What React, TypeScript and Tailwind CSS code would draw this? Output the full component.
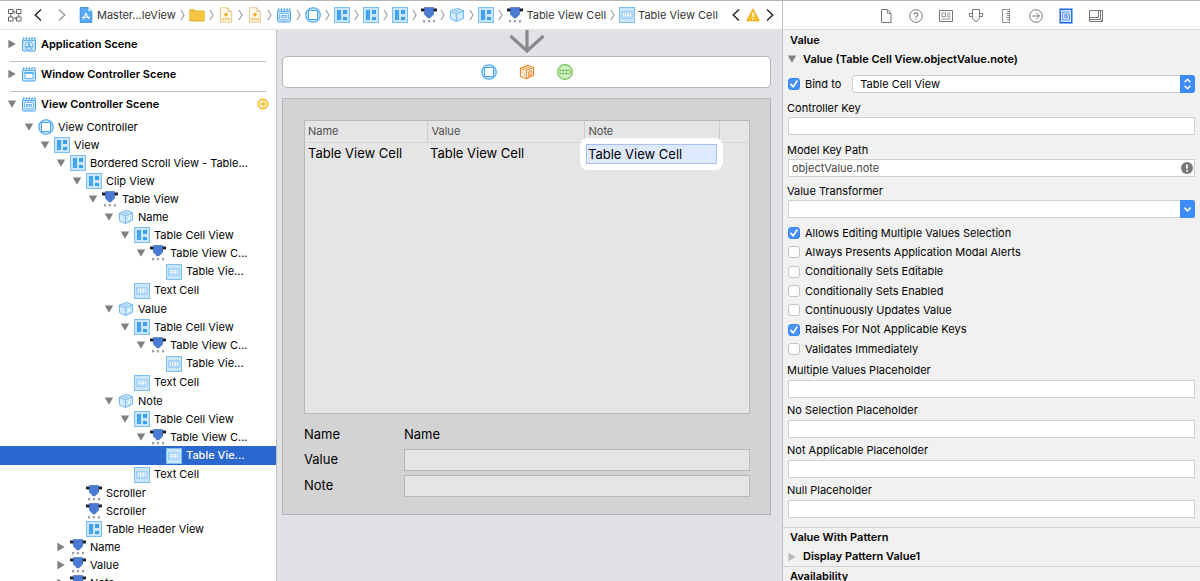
import React from "react";

type IconKind =
  | "appScene" | "windowScene" | "viewScene" | "controller" | "view" | "object"
  | "column" | "cell" | "project" | "folder" | "storyboard" | "responder" | "exit";

const BLUE = "#45a2ee";
const PALE = "#c9e6fc";

function Clapper({ children }: { children: React.ReactNode }) {
  return (
    <>
      <path d="M1.5 4.5h13v9a1.5 1.5 0 0 1-1.5 1.5H3a1.5 1.5 0 0 1-1.5-1.5z" fill={PALE} stroke={BLUE} />
      <path d="M1.5 1.2h13v3h-13z" fill="#e4f3fe" />
      <path d="M2 3.6l1.2-2M4.8 3.6l1.2-2M7.6 3.6l1.2-2M10.4 3.6l1.2-2M13.2 3.6l1.2-2" stroke={BLUE} strokeWidth="1.3" />
      {children}
    </>
  );
}

function Icon({ kind }: { kind: IconKind }) {
  let body: React.ReactNode = null;
  switch (kind) {
    case "appScene":
      body = (
        <Clapper>
          <circle cx="8" cy="9.8" r="3.9" fill="#e4f3fe" stroke={BLUE} strokeWidth=".7" />
          <path d="M5.8 12.4L8.6 7M10.2 12.4L7.4 7M4.6 10.8h6.8" stroke={BLUE} strokeWidth=".9" />
        </Clapper>
      );
      break;
    case "windowScene":
      body = (
        <Clapper>
          <rect x="4" y="6.5" width="8" height="6" fill="#fff" stroke={BLUE} strokeWidth=".8" />
          <path d="M4 7.2h8" stroke={BLUE} strokeWidth="1.2" />
        </Clapper>
      );
      break;
    case "viewScene":
      body = (
        <Clapper>
          <rect x="3.7" y="6.4" width="8.6" height="6.4" rx="1" fill="#fff" stroke={BLUE} strokeWidth=".8" />
          <rect x="5.7" y="8.4" width="4.6" height="2.4" fill={PALE} stroke={BLUE} strokeWidth=".8" />
        </Clapper>
      );
      break;
    case "controller":
      body = (
        <>
          <circle cx="8" cy="8" r="7.3" fill={PALE} stroke={BLUE} strokeWidth="1.1" />
          <rect x="3.5" y="3.5" width="9" height="9" rx=".6" fill="#fff" stroke={BLUE} strokeWidth="1" />
        </>
      );
      break;
    case "view":
      body = (
        <>
          <rect x=".5" y=".5" width="15" height="15" fill={PALE} stroke="#7dbff5" />
          <path d="M3 3h4v10H3zM9 3h4v4H9zM9 10h4v3H9z" fill="#3d9ff0" />
          <path d="M5.2 3v10" stroke="#6fb9f5" strokeWidth=".5" />
        </>
      );
      break;
    case "object":
      body = (
        <>
          <path d="M0 1.6h4v3H1L0 4zM16 1.6h-4v3h3l1-.6z" fill="#1f1f21" />
          <path d="M3.4.6h9.2v6.6L8.8 11H7.2L3.4 7.2z" fill="#4a7ad4" stroke="#315fb4" strokeWidth=".6" />
          <path d="M3 13v2.4M8 13v2.4M13 13v2.4" stroke="#3c3c3c" strokeWidth="1" />
        </>
      );
      break;
    case "column":
      body = (
        <>
          <path d="M1.4 4.2L8.6 1.4l6 2.4v7.4L7.4 14.6l-6-3z" fill="#d3ebfd" stroke="#6ab6f2" strokeWidth="1" strokeLinejoin="round" />
          <path d="M1.4 4.4l6 2.4 7.2-2.8M7.4 6.8v7.6" fill="none" stroke="#6ab6f2" strokeWidth=".9" />
          <path d="M4.4 3.1l6.2 2.4M4.4 5.6l6.2-2.6" fill="none" stroke="#86c4f5" strokeWidth=".7" />
          <path d="M9.2 8.4v3.6l3.6-1.6V6.8z" fill="#eef8ff" stroke="#9bcff7" strokeWidth=".6" />
        </>
      );
      break;
    case "cell":
      body = (
        <>
          <rect x=".5" y=".5" width="15" height="15" fill={PALE} stroke="#7dbff5" />
          <rect x="3" y="5" width="10" height="6" fill="#fff" stroke="#6db6f4" strokeWidth=".9" />
          <path d="M4.6 7h7M4.6 9.2h7" stroke="#5aaaf0" strokeWidth="1" strokeDasharray="1.4 1.2" />
        </>
      );
      break;
    case "project":
      body = (
        <>
          <path d="M2.2.6h8l3.6 3.6v11.2H2.2z" fill="#56a9f4" stroke="#2f7fd8" strokeWidth=".8" />
          <path d="M10.2.6v3.6h3.6z" fill="#d8ecfd" />
          <path d="M5 12l3.4-6M11 12L7.6 6M4 10.2h8" stroke="#fff" strokeWidth="1.1" />
        </>
      );
      break;
    case "folder":
      body = (
        <>
          <path d="M.4 2.2h5l1 1.4h9.2v10H.4z" fill="#e5b32d" />
          <path d="M.4 4.4h15.2v9.8H.4z" fill="#f4c642" />
          <path d="M.4 13.8h15.2" stroke="#d9a51d" strokeWidth=".8" />
        </>
      );
      break;
    case "storyboard":
      body = (
        <>
          <path d="M2.4.8h7.4l3.8 3.8v10.6H2.4z" fill="#fff8ea" stroke="#e8c98c" />
          <path d="M9.8.8v3.8h3.8" fill="none" stroke="#d3b988" strokeWidth=".8" />
          <path d="M8 5.4l2.2 2.2L8 9.8 5.8 7.6z" fill="#f0ab22" />
          <path d="M4.2 11.4h1.8v1.6H4.2zM10 11.4h1.8v1.6H10zM6 12.2h4M8 9.8v2.4" stroke="#efc060" strokeWidth=".8" fill="none" />
        </>
      );
      break;
    case "responder":
      body = (
        <>
          <path d="M1.4 4.2L8.6 1.2l6 2.2v7.8L7.4 14.8l-6-2.6z" fill="#fff6ec" stroke="#e9892a" strokeWidth="1.1" strokeLinejoin="round" />
          <path d="M1.4 4.4l6 2.2 7.2-3M7.4 6.6v8M3.8 3.4l6 2.2M6.2 2.4l6 2.2M9.4 8v4.4l3.4-1.7V6.6zM11 7.3v4.2M3.2 7.4v2M5.4 9.6v2" fill="none" stroke="#e9892a" strokeWidth=".9" />
        </>
      );
      break;
    case "exit":
      body = (
        <>
          <circle cx="8" cy="8" r="7.4" fill="#cdeebf" stroke="#6cc04a" strokeWidth="1.1" />
          <path d="M3 6.4h10v3.2H3zM6.3 6.4v3.2M9.7 6.4v3.2" fill="#e9f8e2" stroke="#5db53b" strokeWidth=".8" />
        </>
      );
      break;
  }
  return <svg viewBox="0 0 16 16" className="size-4 shrink-0" fill="none" aria-hidden="true">{body}</svg>;
}

function Triangle({ open, faint = false }: { open: boolean; faint?: boolean }) {
  return (
    <svg viewBox="0 0 10 10" className="size-[10px] shrink-0" aria-hidden="true">
      <path d={open ? "M.8 1.4h8.4L5 8.8z" : "M1.4.8v8.4L8.8 5z"} fill={faint ? "#b9b9b9" : "#808080"} />
    </svg>
  );
}

function Crumb() {
  return (
    <svg viewBox="0 0 6 16" className="h-4 w-[5px] shrink-0" fill="none" aria-hidden="true">
      <path d="M1 2l4 6-4 6" stroke="#777" strokeWidth="1.1" />
    </svg>
  );
}

function Arrow({ dir, dim = false }: { dir: "left" | "right"; dim?: boolean }) {
  return (
    <svg viewBox="0 0 8 14" className="h-[14px] w-2 shrink-0" fill="none" aria-hidden="true">
      <path d={dir === "left" ? "M7 1.5L1.2 7 7 12.5" : "M1 1.5L6.8 7 1 12.5"} stroke={dim ? "#9a9a9a" : "#222"} strokeWidth="1.4" />
    </svg>
  );
}

const crumbs: { icon: IconKind; text?: string }[] = [
  { icon: "project", text: "Master...leView" },
  { icon: "folder" },
  { icon: "storyboard" },
  { icon: "storyboard" },
  { icon: "viewScene" },
  { icon: "controller" },
  { icon: "view" },
  { icon: "view" },
  { icon: "view" },
  { icon: "object" },
  { icon: "column" },
  { icon: "view" },
  { icon: "object", text: "Table View Cell" },
  { icon: "cell", text: "Table View Cell" },
];

function JumpBar() {
  return (
    <nav className="flex h-[29px] shrink-0 items-center border-b border-[#e2e2e2] bg-white px-2 text-[#333]">
      <button type="button" aria-label="Related items">
        <svg viewBox="0 0 14 14" className="size-[14px]" fill="none" stroke="#666" aria-hidden="true">
          <path d="M.5 1.5h4.5v4H.5zM8.5 1.5h4.5v4H8.5zM.5 9h4.5v4H.5zM8.5 9h4.5v4H8.5zM5 3.5h1.8v2M8.5 11H7V9M2.8 5.5V9M10.8 5.5V9" />
        </svg>
      </button>
      <button type="button" aria-label="Back" className="ml-3"><Arrow dir="left" /></button>
      <button type="button" aria-label="Forward" className="ml-4"><Arrow dir="right" dim /></button>
      <ol className="ml-3 flex max-w-[640px] flex-1 items-center justify-between">
        {crumbs.map((c, i) => (
          <React.Fragment key={i}>
            {i > 0 && <li aria-hidden="true"><Crumb /></li>}
            <li>
              <a href="#jump" className="flex items-center gap-[3px] whitespace-nowrap">
                <Icon kind={c.icon} />
                {c.text}
              </a>
            </li>
          </React.Fragment>
        ))}
      </ol>
      <div className="ml-auto flex items-center pl-3">
        <button type="button" aria-label="Previous issue"><Arrow dir="left" /></button>
        <button type="button" aria-label="Issues" className="mx-1.5">
          <svg viewBox="0 0 14 14" className="size-[14px]" aria-hidden="true">
            <path d="M7 1.2L13 12.6H1z" fill="#fcc02e" stroke="#f3ad1b" strokeWidth="1.2" strokeLinejoin="round" />
            <path d="M7 4.6v4.2M7 10v1.4" stroke="#fff" strokeWidth="1.5" />
          </svg>
        </button>
        <button type="button" aria-label="Next issue"><Arrow dir="right" /></button>
      </div>
    </nav>
  );
}

type Node = { label: string; icon: IconKind; open?: boolean; selected?: boolean; children?: Node[] };

function column(label: string, selected = false): Node {
  return {
    label, icon: "column", open: true, children: [
      {
        label: "Table Cell View", icon: "view", open: true, children: [
          { label: "Table View C...", icon: "object", open: true, children: [{ label: "Table Vie...", icon: "cell", selected }] },
        ],
      },
      { label: "Text Cell", icon: "cell" },
    ],
  };
}

const tree: Node = {
  label: "View Controller", icon: "controller", open: true, children: [
    {
      label: "View", icon: "view", open: true, children: [
        {
          label: "Bordered Scroll View - Table...", icon: "view", open: true, children: [
            {
              label: "Clip View", icon: "view", open: true, children: [
                { label: "Table View", icon: "object", open: true, children: [column("Name"), column("Value"), column("Note", true)] },
              ],
            },
            { label: "Scroller", icon: "object" },
            { label: "Scroller", icon: "object" },
            { label: "Table Header View", icon: "view" },
          ],
        },
        { label: "Name", icon: "object", open: false },
        { label: "Value", icon: "object", open: false },
        { label: "Note", icon: "object", open: false },
      ],
    },
  ],
};

function TreeRow({ node, depth }: { node: Node; depth: number }) {
  const height = node.icon === "cell" ? "h-[19px]" : "h-[18px]";
  const tone = node.selected ? "bg-[#2a68d0] font-medium text-white" : "";
  return (
    <li>
      <div className={`flex items-center whitespace-nowrap ${height} ${tone}`} style={{ paddingLeft: 24 + depth * 16 }}>
        <span className="flex w-[14px] shrink-0">
          {node.open !== undefined && (
            <button type="button" aria-label={node.open ? "Collapse" : "Expand"}><Triangle open={node.open} /></button>
          )}
        </span>
        <Icon kind={node.icon} />
        <span className="ml-1">{node.label}</span>
      </div>
      {node.children && (
        <ul>
          {node.children.map((c, i) => <TreeRow key={i} node={c} depth={depth + 1} />)}
        </ul>
      )}
    </li>
  );
}

function SceneRow({ label, icon, open = false }: { label: string; icon: IconKind; open?: boolean }) {
  return (
    <div className="-mx-[3px] flex h-5 items-center font-semibold">
      <button type="button" aria-label={open ? "Collapse" : "Expand"} className="mr-1"><Triangle open={open} /></button>
      <Icon kind={icon} />
      <span className="ml-1">{label}</span>
      {open && (
        <svg viewBox="0 0 12 12" className="ml-auto size-3" fill="none" aria-hidden="true">
          <circle cx="6" cy="6" r="4.6" fill="#fff8e2" stroke="#f6b81c" strokeWidth="1.7" />
          <path d="M3.4 6h4.4M6 3.9L8.2 6 6 8.1" stroke="#f6b81c" strokeWidth="1.3" />
        </svg>
      )}
    </div>
  );
}

function Outline() {
  return (
    <aside className="w-[277px] shrink-0 overflow-hidden border-r border-[#bfc0c3] bg-white pt-0.5">
      <div className="px-[10px]">
        <div className="border-b border-[#c2c2c2] pb-[7px] pt-0.5"><SceneRow label="Application Scene" icon="appScene" /></div>
        <div className="border-b border-[#c2c2c2] pb-[7px] pt-0.5"><SceneRow label="Window Controller Scene" icon="windowScene" /></div>
        <div className="pb-1 pt-0.5"><SceneRow label="View Controller Scene" icon="viewScene" open /></div>
      </div>
      <ul><TreeRow node={tree} depth={0} /></ul>
    </aside>
  );
}

function Canvas() {
  return (
    <main className="min-w-0 flex-1 overflow-hidden bg-[#e1e2e7] pl-[5px] pr-[11px] text-[13px]">
      <svg viewBox="0 0 36 23" className="mx-auto h-[23px] w-9" fill="none" stroke="#8a8a8a" strokeWidth="3.2" aria-hidden="true">
        <path d="M18 0v21M1.5 6L18 21 34.5 6" />
      </svg>
      <div className="mt-[3px] flex h-8 items-center justify-center gap-[22px] rounded-[5px] border border-[#b6b6b9] bg-white">
        <Icon kind="controller" />
        <Icon kind="responder" />
        <Icon kind="exit" />
      </div>
      <section className="mt-[10px] border border-[#b4b5b6] bg-[#d3d3d3] pb-[17px] pl-[21px] pr-5 pt-[21px]">
        <div className="h-[294px] border border-[#b9b9b9] bg-[#e5e5e5]">
          <table className="w-full table-fixed border-collapse text-left">
            <colgroup>
              <col className="w-[122px]" />
              <col className="w-[157px]" />
              <col className="w-[135px]" />
              <col />
            </colgroup>
            <thead className="text-[11px] text-[#4c4c4c]">
              <tr className="h-[21px] border-b border-[#d5d5d5]">
                <th className="border-r border-[#cccccc] pl-[3px] font-normal">Name</th>
                <th className="border-r border-[#cccccc] pl-1 font-normal">Value</th>
                <th className="border-r border-[#cccccc] pl-1 font-normal">Note</th>
                <th aria-label="Spare column" />
              </tr>
            </thead>
            <tbody>
              <tr className="h-[22px]">
                <td className="pl-[3px]">Table View Cell</td>
                <td className="pl-[3px]">Table View Cell</td>
                <td className="relative">
                  <div className="absolute -left-1 -top-[5px] z-10 w-[143px] rounded-lg bg-white p-[6px]">
                    <input
                      aria-label="Note cell"
                      defaultValue="Table View Cell"
                      className="block h-5 w-full border border-[#a9bff5] bg-[#dfe9fd] pl-px outline-none"
                    />
                  </div>
                </td>
                <td />
              </tr>
            </tbody>
          </table>
        </div>
        <div className="mt-[9px] grid grid-cols-[100px_1fr] items-center gap-y-1">
          <span className="h-[22px] leading-[22px]">Name</span>
          <span className="h-[22px] leading-[22px]">Name</span>
          <label htmlFor="detail-value">Value</label>
          <input id="detail-value" className="h-[22px] border border-[#b9b9b9] bg-[#e5e5e5] px-1" />
          <label htmlFor="detail-note">Note</label>
          <input id="detail-note" className="h-[22px] border border-[#b9b9b9] bg-[#e5e5e5] px-1" />
        </div>
      </section>
    </main>
  );
}

const inspectorTabs: { name: string; art: React.ReactNode }[] = [
  { name: "File", art: <path d="M3.5 1.5h5.8l3.7 3.7v9.3H3.5zM9.3 1.5v3.7H13" /> },
  {
    name: "Quick help",
    art: <><circle cx="8" cy="8" r="6.3" /><path d="M6 6.6a2 1.9 0 1 1 3 1.6c-.7.4-1 .7-1 1.4M8 10.6v1.2" strokeWidth="1.1" /></>,
  },
  {
    name: "Identity",
    art: <><path d="M1.5 2.5h13v11h-13z" /><path d="M4 5h3.6v3.6H4zM9.2 5.2h3.2M9.2 7h3.2M9.2 8.8h3.2M3.6 11h8.8" strokeWidth=".8" /></>,
  },
  { name: "Attributes", art: <path d="M4.5 1.5h7v8.6L8 14l-3.5-3.9zM4.5 5.5h-3v3h3M11.5 5.5h3v3h-3" /> },
  { name: "Size", art: <path d="M4.5 1.5h7v13h-7zM11.5 3.5H9M11.5 5.5H8M11.5 7.5H9M11.5 9.5H8M11.5 11.5H9" strokeWidth=".8" /> },
  { name: "Connections", art: <><circle cx="8" cy="8" r="6.3" /><path d="M4.2 8h7.2M8.4 4.9L11.5 8l-3.1 3.1" /></> },
  {
    name: "Bindings",
    art: (
      <>
        <path d="M2.2 1.2h11.6v13.6H2.2z" fill="#dce8ff" stroke="#1464f6" strokeWidth="1.4" />
        <path d="M11.6 4H4.6v8h6.8V6.2H6.8v3.6h2.6V8" stroke="#3f7ff8" strokeWidth=".8" />
        <circle cx="8.4" cy="7.8" r=".8" fill="#3f7ff8" stroke="none" />
      </>
    ),
  },
  { name: "View effects", art: <path d="M1.5 2.5h13v11h-13zM1.5 11.5h11v-9M1.5 9.5h9v-7M14.5 13.5l-2-2" /> },
];

function InspectorBar() {
  return (
    <div className="flex h-[29px] shrink-0 items-center justify-center gap-[14px] border-b border-[#dcdcdc] bg-white pr-0.5 pt-0.5">
      {inspectorTabs.map((t) => (
        <button type="button" key={t.name} aria-label={t.name}>
          <svg viewBox="0 0 16 16" className="size-4" fill="none" stroke="#777" strokeWidth="1" aria-hidden="true">{t.art}</svg>
        </button>
      ))}
    </div>
  );
}

function Check({ label, checked = false }: { label: string; checked?: boolean }) {
  return (
    <label className="flex h-4 items-center gap-[5px]">
      <span className="grid size-3">
        <input
          type="checkbox"
          defaultChecked={checked}
          className="peer col-start-1 row-start-1 size-3 appearance-none rounded-[3px] border border-[#c3c3c3] bg-white checked:border-[#3a87f5] checked:bg-[#4791f7]"
        />
        <svg viewBox="0 0 12 12" className="pointer-events-none col-start-1 row-start-1 size-3 opacity-0 peer-checked:opacity-100" fill="none" aria-hidden="true">
          <path d="M3 6.4l2.2 2.5L9 3" stroke="#fff" strokeWidth="1.6" strokeLinecap="round" strokeLinejoin="round" />
        </svg>
      </span>
      {label}
    </label>
  );
}

const fieldClass = "block h-[18px] w-full border border-[#d0d0d0] bg-white px-[3px] text-[#444] outline-none";

function Field({ id, label }: { id: string; label: string }) {
  return (
    <div className="pb-0.5">
      <label htmlFor={id} className="-ml-px block h-5 leading-5">{label}</label>
      <input id={id} className={fieldClass} />
    </div>
  );
}

const options: [string, boolean][] = [
  ["Allows Editing Multiple Values Selection", true],
  ["Always Presents Application Modal Alerts", false],
  ["Conditionally Sets Editable", false],
  ["Conditionally Sets Enabled", false],
  ["Continuously Updates Value", false],
  ["Raises For Not Applicable Keys", true],
  ["Validates Immediately", false],
];

function Inspector() {
  return (
    <aside className="flex w-[418px] shrink-0 flex-col overflow-hidden border-l border-[#bfc0c3] bg-[#f1f1f1]">
      <InspectorBar />
      <div className="px-[5px]">
        <h2 className="h-5 pl-0.5 font-semibold leading-5">Value</h2>
        <h3 className="-ml-px flex h-[18px] items-center font-semibold">
          <button type="button" aria-label="Collapse" className="mr-1.5"><Triangle open /></button>
          Value (Table Cell View.objectValue.note)
        </h3>
        <div className="mt-[7px] flex h-[18px] items-center">
          <Check label="Bind to" checked />
          <div className="relative ml-[11px] flex-1">
            <select aria-label="Bind to" className="block h-[18px] w-full appearance-none rounded-[3px] border border-[#cfcfcf] bg-white pl-[7px] outline-none">
              <option>Table Cell View</option>
            </select>
            <svg viewBox="0 0 15 18" className="pointer-events-none absolute right-0 top-0 h-[18px] w-[15px]" fill="none" aria-hidden="true">
              <path d="M0 0h12a3 3 0 0 1 3 3v12a3 3 0 0 1-3 3H0z" fill="#3d8bf8" />
              <path d="M4.6 7.2l2.9-3 2.9 3M4.6 10.8l2.9 3 2.9-3" stroke="#fff" strokeWidth="1.4" />
            </svg>
          </div>
        </div>
        <div className="mt-1.5">
          <label htmlFor="controller-key" className="-ml-px block h-[18px] leading-[18px]">Controller Key</label>
          <input id="controller-key" className={fieldClass} />
        </div>
        <div className="mt-1.5">
          <label htmlFor="key-path" className="-ml-px block h-[18px] leading-[18px]">Model Key Path</label>
          <div className="relative">
            <input id="key-path" defaultValue="objectValue.note" className={fieldClass} />
            <svg viewBox="0 0 12 12" className="absolute right-0.5 top-[3px] size-3" aria-hidden="true">
              <circle cx="6" cy="6" r="6" fill="#777" />
              <path d="M6 2.4v4.4M6 8v1.7" stroke="#fff" strokeWidth="1.7" />
            </svg>
          </div>
        </div>
        <div className="mt-[5px]">
          <label htmlFor="transformer" className="-ml-px block h-[18px] leading-[18px]">Value Transformer</label>
          <div className="relative">
            <input id="transformer" className={fieldClass} />
            <button type="button" aria-label="Show transformers" className="absolute right-0 top-0">
              <svg viewBox="0 0 15 18" className="block h-[18px] w-[15px]" fill="none" aria-hidden="true">
                <path d="M0 0h12a3 3 0 0 1 3 3v12a3 3 0 0 1-3 3H0z" fill="#3d8bf8" />
                <path d="M4.4 7.6l3.1 3.2 3.1-3.2" stroke="#fff" strokeWidth="1.6" />
              </svg>
            </button>
          </div>
        </div>
        <div className="mb-[3px] mt-[7px] grid h-[132px] content-between">
          {options.map(([label, checked]) => <Check key={label} label={label} checked={checked} />)}
        </div>
        <Field id="multiple" label="Multiple Values Placeholder" />
        <Field id="no-selection" label="No Selection Placeholder" />
        <Field id="not-applicable" label="Not Applicable Placeholder" />
        <Field id="null" label="Null Placeholder" />
      </div>
      <section className="mt-[7px] border-t border-[#d2d2d2] pl-[7px]">
        <h2 className="h-[19px] font-semibold leading-[19px]">Value With Pattern</h2>
        <h3 className="-ml-[3px] flex h-[19px] items-center font-semibold">
          <button type="button" aria-label="Expand" className="mr-1.5"><Triangle open={false} faint /></button>
          Display Pattern Value1
        </h3>
      </section>
      <section className="border-t border-[#d2d2d2] pl-[7px]">
        <h2 className="h-[18px] font-semibold leading-[18px]">Availability</h2>
      </section>
    </aside>
  );
}

export default function App() {
  return (
    <div className="flex h-screen overflow-hidden border-t border-[#b4b4b4] bg-white font-['Inter','Liberation_Sans',sans-serif] text-[11px] text-black">
      <div className="flex min-w-0 flex-1 flex-col">
        <JumpBar />
        <div className="flex min-h-0 flex-1">
          <Outline />
          <Canvas />
        </div>
      </div>
      <Inspector />
    </div>
  );
}
